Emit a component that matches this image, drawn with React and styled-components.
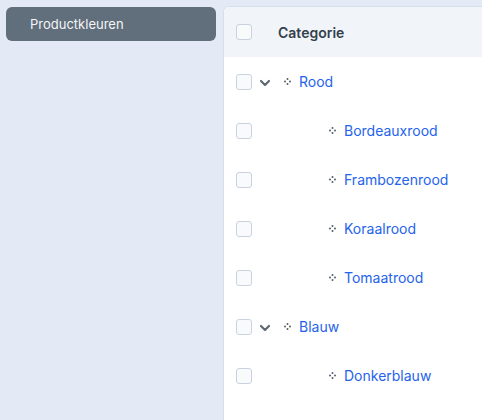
import React from "react";
import styled, { createGlobalStyle } from "styled-components";

const Global = createGlobalStyle`
  html, body { margin: 0; padding: 0; }
  body {
    background: #e4eaf5;
    font-family: Inter, "Noto Sans", sans-serif;
    -webkit-font-smoothing: antialiased;
  }
`;

const Page = styled.div`
  display: flex;
  height: 420px;
  overflow: hidden;
`;

const Sidebar = styled.aside`
  width: 223px;
  flex: none;
  padding: 7px 7px 0 6px;
  box-sizing: border-box;
`;

const NavItem = styled.div`
  height: 34px;
  display: flex;
  align-items: center;
  padding-left: 24px;
  background: #616e7b;
  border-radius: 6px;
  color: #f3f5f8;
  font-size: 13px;
`;

const Panel = styled.main`
  flex: 1;
  margin-top: 6px;
  background: #ffffff;
  border-left: 1px solid #d6deea;
  border-top: 1px solid #d6deea;
  border-top-left-radius: 6px;
  overflow: hidden;
`;

const HeadRow = styled.div`
  height: 50px;
  display: flex;
  align-items: center;
  padding-left: 12px;
  background: #f1f5fa;
`;

const HeadLabel = styled.span`
  margin-left: 26px;
  font-size: 14px;
  font-weight: 600;
  color: #353f4c;
`;

const Row = styled.div`
  height: 49px;
  display: flex;
  align-items: center;
  padding-left: 12px;
`;

const Box = styled.span`
  width: 16px;
  height: 16px;
  box-sizing: border-box;
  border: 1px solid #c9d3df;
  border-radius: 3px;
  background: #f8fafc;
  flex: none;
`;

const Tree = styled.div`
  display: flex;
  align-items: center;
  margin-left: ${(p) => (p.$child ? "77px" : "7px")};
`;

const Chevron = styled.svg`
  width: 12px;
  height: 12px;
  margin-top: 3px;
  margin-right: 13px;
  color: #5f6873;
`;

const Move = styled.svg`
  width: 7px;
  height: 7px;
  margin-right: 8px;
  color: #555d68;
`;

const Name = styled.a`
  font-size: 14px;
  color: #2563eb;
  text-decoration: none;
`;

const rows = [
  { name: "Rood", parent: true },
  { name: "Bordeauxrood" },
  { name: "Frambozenrood" },
  { name: "Koraalrood" },
  { name: "Tomaatrood" },
  { name: "Blauw", parent: true },
  { name: "Donkerblauw" },
];

function MoveIcon() {
  return (
    <Move viewBox="0 0 7 7" fill="currentColor">
      <circle cx="3.5" cy="1" r="1" />
      <circle cx="1" cy="3.5" r="1" />
      <circle cx="6" cy="3.5" r="1" />
      <circle cx="3.5" cy="6" r="1" />
    </Move>
  );
}

export default function App() {
  return (
    <>
      <Global />
      <Page>
        <Sidebar>
          <NavItem>Productkleuren</NavItem>
        </Sidebar>
        <Panel>
          <HeadRow>
            <Box />
            <HeadLabel>Categorie</HeadLabel>
          </HeadRow>
          {rows.map((r) => (
            <Row key={r.name}>
              <Box />
              <Tree $child={!r.parent}>
                {r.parent && (
                  <Chevron viewBox="0 0 12 12" fill="none" stroke="currentColor" strokeWidth="2.2" strokeLinecap="round" strokeLinejoin="round">
                    <path d="M2 4l4 4 4-4" />
                  </Chevron>
                )}
                <MoveIcon />
                <Name href="#">{r.name}</Name>
              </Tree>
            </Row>
          ))}
        </Panel>
      </Page>
    </>
  );
}
